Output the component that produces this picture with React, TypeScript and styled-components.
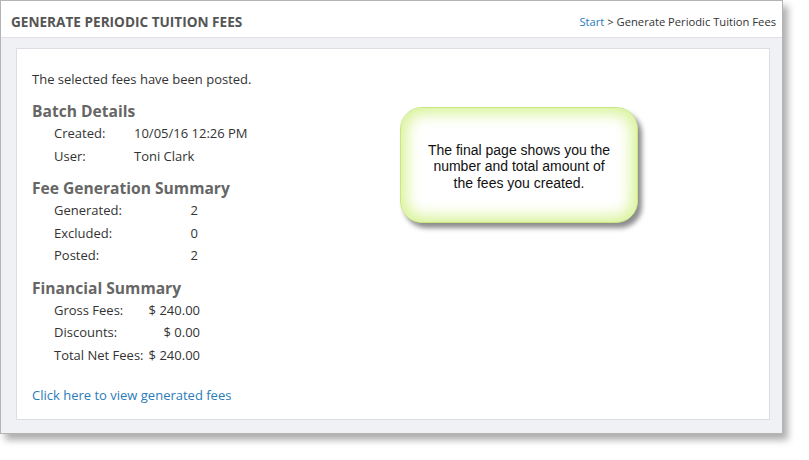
import React from 'react';
import styled, { createGlobalStyle } from 'styled-components';

const GlobalStyle = createGlobalStyle`
    html, body {
        margin: 0;
        padding: 0;
        background: #ffffff;
    }
    body {
        font-family: 'Open Sans', 'Liberation Sans', sans-serif;
        color: #333333;
    }
`;

const Stage = styled.div`
    position: relative;
    width: 809px;
    height: 460px;
`;

const Frame = styled.div`
    width: 783px;
    border: 1px solid #b4b4b4;
    box-sizing: border-box;
    background: #f0f1f5;
    box-shadow: 5px 6px 7px rgba(0, 0, 0, 0.32);
`;

const Header = styled.div`
    display: flex;
    justify-content: space-between;
    align-items: center;
    height: 37px;
    box-sizing: border-box;
    padding: 5px 6px 0 10px;
    background: #ffffff;
    border-bottom: 1px solid #dfe1e6;
`;

const Title = styled.h1`
    margin: 0;
    font-size: 13.6px;
    font-weight: 700;
    text-transform: uppercase;
    color: #555555;
`;

const Breadcrumb = styled.div`
    font-size: 11.2px;
    color: #333333;
`;

const LinkText = styled.a`
    color: #2b7bb9;
    text-decoration: none;
`;

const Body = styled.div`
    padding: 10px 12px 13px 15px;
`;

const Card = styled.div`
    background: #ffffff;
    border: 1px solid #dcdee3;
    padding: 20px 15px 14px 15px;
    font-size: 13px;
`;

const Intro = styled.p`
    margin: 0;
    line-height: 20px;
`;

const SectionTitle = styled.h2<{ $gap: number }>`
    margin: ${(p) => p.$gap}px 0 0 0;
    font-size: 15.6px;
    font-weight: 700;
    line-height: 22px;
    color: #666666;
`;

const Row = styled.div`
    display: flex;
    padding-left: 22px;
    height: 22.5px;
    align-items: center;
`;

const Label = styled.span<{ $width: number }>`
    width: ${(p) => p.$width}px;
    flex-shrink: 0;
`;

const Value = styled.span<{ $width?: number }>`
    width: ${(p) => (p.$width ? `${p.$width}px` : 'auto')};
    text-align: ${(p) => (p.$width ? 'right' : 'left')};
    white-space: nowrap;
`;

const FooterLink = styled(LinkText)`
    display: block;
    margin-top: 19px;
    line-height: 20px;
`;

const Callout = styled.div`
    position: absolute;
    left: 400px;
    top: 107px;
    width: 238px;
    height: 116px;
    box-sizing: border-box;
    border-radius: 22px;
    border: 1px solid #c9e77e;
    background: #ffffff;
    box-shadow: inset 0 0 16px 5px #d6f291, 4px 5px 5px rgba(0, 0, 0, 0.45);
    display: flex;
    align-items: center;
    justify-content: center;
    text-align: center;
    font-family: 'Liberation Sans', Arial, sans-serif;
    font-size: 14px;
    line-height: 16.5px;
    color: #111111;
    padding: 3px 24px 0 24px;
`;

type Item = { label: string; value: string };

const Section = ({
    title,
    gap,
    items,
    labelWidth,
    valueWidth,
}: {
    title: string;
    gap: number;
    items: Item[];
    labelWidth: number;
    valueWidth?: number;
}) => (
    <>
        <SectionTitle $gap={gap}>{title}</SectionTitle>
        {items.map((item) => (
            <Row key={item.label}>
                <Label $width={labelWidth}>{item.label}</Label>
                <Value $width={valueWidth}>{item.value}</Value>
            </Row>
        ))}
    </>
);

const App = () => (
    <Stage>
        <GlobalStyle />
        <Frame>
            <Header>
                <Title>Generate Periodic Tuition Fees</Title>
                <Breadcrumb>
                    <LinkText href="#">Start</LinkText> &gt; Generate Periodic Tuition Fees
                </Breadcrumb>
            </Header>
            <Body>
                <Card>
                    <Intro>The selected fees have been posted.</Intro>
                    <Section
                        title="Batch Details"
                        gap={11}
                        labelWidth={80}
                        items={[
                            { label: 'Created:', value: '10/05/16 12:26 PM' },
                            { label: 'User:', value: 'Toni Clark' },
                        ]}
                    />
                    <Section
                        title="Fee Generation Summary"
                        gap={10}
                        labelWidth={128}
                        valueWidth={16}
                        items={[
                            { label: 'Generated:', value: '2' },
                            { label: 'Excluded:', value: '0' },
                            { label: 'Posted:', value: '2' },
                        ]}
                    />
                    <Section
                        title="Financial Summary"
                        gap={10}
                        labelWidth={94}
                        valueWidth={52}
                        items={[
                            { label: 'Gross Fees:', value: '$ 240.00' },
                            { label: 'Discounts:', value: '$ 0.00' },
                            { label: 'Total Net Fees:', value: '$ 240.00' },
                        ]}
                    />
                    <FooterLink href="#">Click here to view generated fees</FooterLink>
                </Card>
            </Body>
        </Frame>
        <Callout>The final page shows you the number and total amount of the fees you created.</Callout>
    </Stage>
);

export default App;
